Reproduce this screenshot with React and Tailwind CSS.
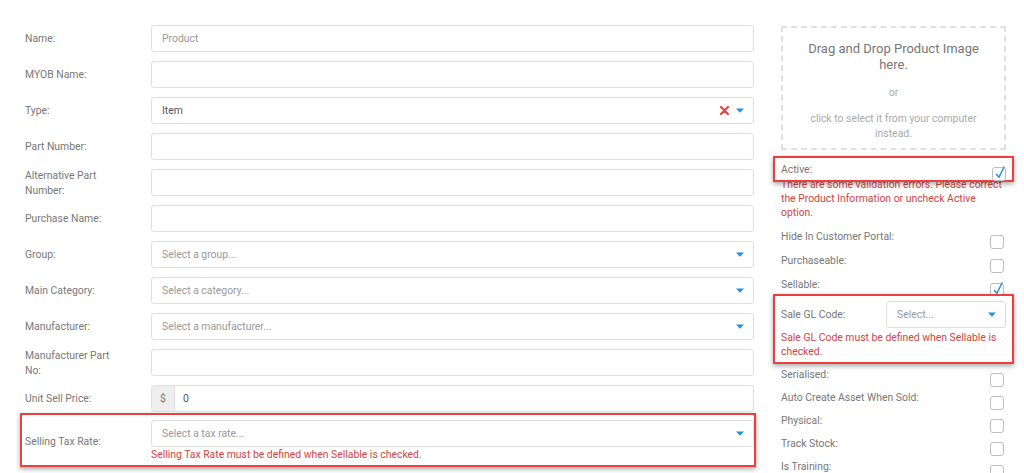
import React from 'react'

const FONT = { fontFamily: 'Roboto, "Liberation Sans", Arial, sans-serif' }

function Caret() {
  return (
    <svg width="8" height="5" viewBox="0 0 8 5" className="shrink-0">
      <path d="M0 0.5 L8 0.5 L4 4.8 Z" fill="#1e90e0" />
    </svg>
  )
}

function ClearX() {
  return (
    <svg width="9" height="9" viewBox="0 0 9 9" className="shrink-0">
      <path d="M1 1 L8 8 M8 1 L1 8" stroke="#f0413a" strokeWidth="2.2" strokeLinecap="round" />
    </svg>
  )
}

function TextInput({ placeholder, value }) {
  return (
    <div className="flex-1 h-[27px] border border-[#dedede] rounded-[3px] bg-white flex items-center px-[10px] text-[10.4px]">
      {value ? <span className="text-[#555]">{value}</span> : <span className="text-[#9a9a9a]">{placeholder}</span>}
    </div>
  )
}

function SelectInput({ placeholder, value, clearable }) {
  return (
    <div className="flex-1 h-[27px] border border-[#dedede] rounded-[3px] bg-white flex items-center pl-[10px] pr-[9px] text-[10.4px]">
      <span className={`flex-1 ${value ? 'text-[#555]' : 'text-[#9a9a9a]'}`}>{value || placeholder}</span>
      {clearable && <span className="mr-[7px] flex"><ClearX /></span>}
      <Caret />
    </div>
  )
}

function Row({ label, children }) {
  return (
    <div className="flex items-center h-[27px] mb-[9px]">
      <div className="w-[126px] shrink-0 text-[10.4px] leading-[15px] text-[#777] pr-[24px]">{label}</div>
      {children}
    </div>
  )
}

function Checkbox({ checked }) {
  return (
    <div className="relative w-[14px] h-[14px] border border-[#bdbdbd] rounded-[3px] bg-white shrink-0">
      {checked && (
        <svg width="14" height="16" viewBox="0 0 14 16" className="absolute left-[0px] -top-[4px]">
          <path d="M3.5 10.5 L6 13.3 L11 3" stroke="#1e90e0" strokeWidth="1.4" fill="none" strokeLinecap="round" />
        </svg>
      )}
    </div>
  )
}

function CheckRow({ label, checked, h = 'h-[24px]' }) {
  return (
    <div className={`flex justify-between items-start ${h}`}>
      <span className="text-[10.4px] leading-[14px] text-[#777]">{label}</span>
      <div className="mt-[5px] mr-[2px]"><Checkbox checked={checked} /></div>
    </div>
  )
}

const annot = 'border-2 border-[#ee3f3f] bg-white shadow-[0_2px_5px_rgba(0,0,0,0.35)]'

export default function App() {
  return (
    <div className="w-[1024px] h-[473px] overflow-hidden bg-white" style={FONT}>
      <div className="flex pl-[20px] pt-[25px]">
        {/* Colonne gauche */}
        <div className="w-[739px] px-[5px]">
          <Row label="Name:"><TextInput placeholder="Product" /></Row>
          <Row label="MYOB Name:"><TextInput /></Row>
          <Row label="Type:"><SelectInput value="Item" clearable /></Row>
          <Row label="Part Number:"><TextInput /></Row>
          <Row label="Alternative Part Number:"><TextInput /></Row>
          <Row label="Purchase Name:"><TextInput /></Row>
          <Row label="Group:"><SelectInput placeholder="Select a group..." /></Row>
          <Row label="Main Category:"><SelectInput placeholder="Select a category..." /></Row>
          <Row label="Manufacturer:"><SelectInput placeholder="Select a manufacturer..." /></Row>
          <Row label="Manufacturer Part No:"><TextInput /></Row>
          <Row label="Unit Sell Price:">
            <div className="flex-1 h-[27px] flex text-[10.4px]">
              <div className="w-[24px] bg-[#eeeeee] border border-[#dedede] rounded-l-[3px] flex items-center justify-center text-[#777]">$</div>
              <div className="flex-1 border border-l-0 border-[#dedede] rounded-r-[3px] flex items-center px-[8px] text-[#555]">0</div>
            </div>
          </Row>

          {/* Taux de taxe */}
          <div className={`-mt-[8px] -ml-[5px] -mr-[2px] pl-[3px] pt-[5px] pb-[3px] flex items-center ${annot}`}>
            <div className="w-[126px] shrink-0 text-[10.4px] leading-[15px] text-[#777]">Selling Tax Rate:</div>
            <div className="flex-1">
              <div className="flex">
                <SelectInput placeholder="Select a tax rate..." />
              </div>
              <div className="mt-[1px] text-[10.4px] leading-[14px] text-[#d0453f]">
                Selling Tax Rate must be defined when Sellable is checked.
              </div>
            </div>
          </div>
        </div>

        {/* Colonne droite */}
        <div className="w-[241px] ml-[14px] px-[8px] pt-[1px]">
          <div className="h-[124px] border-2 border-dashed border-[#e0e0e0] flex flex-col items-center text-center px-[10px]">
            <div className="mt-[13px] text-[13px] leading-[16px] text-[#777]">
              Drag and Drop Product Image<br />here.
            </div>
            <div className="mt-[13px] text-[10.4px] leading-[14px] text-[#aaa]">or</div>
            <div className="mt-[11px] text-[10.4px] leading-[15px] text-[#aaa]">
              click to select it from your computer<br />instead.
            </div>
          </div>

          {/* Actif */}
          <div className={`relative z-10 mt-[6px] -mx-[8px] h-[26px] px-[6px] pt-[5px] flex justify-between items-start ${annot}`}>
            <span className="text-[10.4px] leading-[14px] text-[#777]">Active:</span>
            <div className="mt-[4px]"><Checkbox checked /></div>
          </div>
          <div className="-mt-[4px] text-[10.4px] leading-[14px] text-[#d0453f]">
            There are some validation errors. Please correct the Product Information or uncheck Active option.
          </div>

          <div className="mt-[10px]">
            <CheckRow label="Hide In Customer Portal:" />
            <CheckRow label="Purchaseable:" />
            <CheckRow label="Sellable:" checked />
          </div>

          {/* Code GL */}
          <div className={`relative -mt-[8px] -mx-[8px] px-[6px] pt-[5px] pb-[3px] ${annot}`}>
            <div className="flex items-center">
              <span className="w-[105px] text-[10.4px] text-[#777]">Sale GL Code:</span>
              <div className="flex-1 flex">
                <SelectInput placeholder="Select..." />
              </div>
            </div>
            <div className="mt-[3px] text-[10.4px] leading-[14px] text-[#d0453f]">
              Sale GL Code must be defined when Sellable is checked.
            </div>
          </div>

          <div className="mt-[4px]">
            <CheckRow label="Serialised:" h="h-[23px]" />
            <CheckRow label="Auto Create Asset When Sold:" h="h-[23px]" />
            <CheckRow label="Physical:" h="h-[23px]" />
            <CheckRow label="Track Stock:" h="h-[23px]" />
            <CheckRow label="Is Training:" h="h-[23px]" />
          </div>
        </div>
      </div>
    </div>
  )
}
